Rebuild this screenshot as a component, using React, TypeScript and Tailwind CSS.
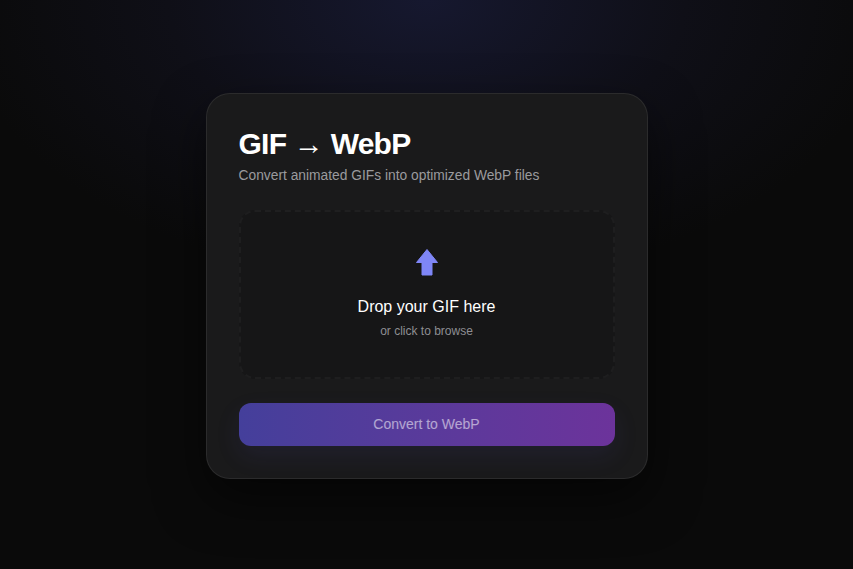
import React, { useState } from 'react';

const UploadArrow: React.FC = () => (
  <svg width="22" height="27" viewBox="0 0 22 27" aria-hidden="true">
    <path
      d="M11 0.5 L21.5 13.5 L16 13.5 L16 26 L6 26 L6 13.5 L0.5 13.5 Z"
      fill="#7f86f7"
      stroke="#7f86f7"
      strokeWidth="1"
      strokeLinejoin="round"
    />
  </svg>
);

const App: React.FC = () => {
  const [file] = useState<File | null>(null);

  return (
    <div
      className="min-h-screen w-full flex items-center justify-center bg-[#0a0a0a] bg-[radial-gradient(ellipse_55%_50%_at_50%_0%,#16182f_0%,#0f0f17_55%,#0a0a0a_100%)]"
      style={{ fontFamily: '"Liberation Sans", Arial, sans-serif' }}
    >
      <main className="mt-[2px] w-[442px] rounded-[24px] border border-white/[0.08] bg-[#1a1a1b] p-8 shadow-[0_20px_50px_rgba(0,0,0,0.55)]">
        <h1 className="text-3xl font-bold tracking-tight text-white">GIF → WebP</h1>
        <p className="mt-1 text-[13.8px] leading-5 text-[#9a9a9e]">Convert animated GIFs into optimized WebP files</p>

        <label className="mt-6 flex h-[169px] cursor-pointer flex-col items-center justify-center rounded-2xl border-2 border-dashed border-white/[0.035] bg-[#161617]">
          <input type="file" accept="image/gif" className="hidden" />
          <UploadArrow />
          <span className="mt-[19px] text-base text-white">Drop your GIF here</span>
          <span className="mt-1 text-xs text-[#8e8e93]">or click to browse</span>
        </label>

        <button
          disabled={!file}
          className="mt-6 h-[43px] w-full rounded-xl bg-gradient-to-r from-[#443f9b] to-[#6c339b] text-sm text-white/55 shadow-[0_10px_24px_rgba(80,70,180,0.12)]"
        >
          Convert to WebP
        </button>
      </main>
    </div>
  );
};

export default App;
